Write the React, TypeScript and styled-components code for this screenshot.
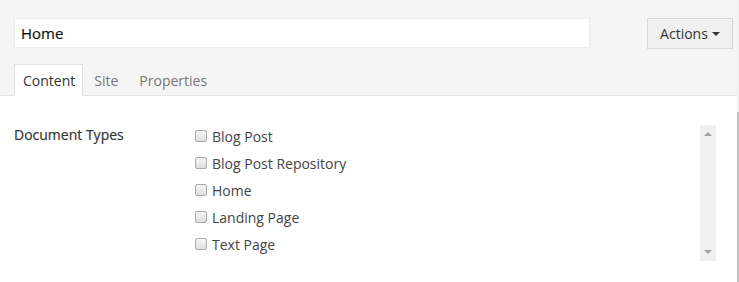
import React from 'react';
import styled, { createGlobalStyle } from 'styled-components';

const docTypes = ['Blog Post', 'Blog Post Repository', 'Home', 'Landing Page', 'Text Page'];
const tabs = ['Content', 'Site', 'Properties'];

function App() {
  return (
    <>
      <GlobalStyle />
      <Page>
        <Main>
          <Header>
            <TopRow>
              <NameInput defaultValue="Home" />
              <ActionsButton>
                Actions <Caret />
              </ActionsButton>
            </TopRow>
            <Tabs>
              {tabs.map((t, i) => (
                <Tab key={t} $active={i === 0}>
                  {t}
                </Tab>
              ))}
            </Tabs>
          </Header>
          <Body>
            <Field>
              <FieldLabel>Document Types</FieldLabel>
              <ListBox>
                <List>
                  {docTypes.map((d) => (
                    <Item key={d}>
                      <Check />
                      {d}
                    </Item>
                  ))}
                </List>
                <ScrollTrack>
                  <Arrow $dir="up" />
                  <Arrow $dir="down" />
                </ScrollTrack>
              </ListBox>
            </Field>
          </Body>
        </Main>
        <PageRail>
          <RailThumb />
        </PageRail>
      </Page>
    </>
  );
}

export default App;

const GlobalStyle = createGlobalStyle`
  html, body {
    margin: 0;
    padding: 0;
    background: #fff;
    font-family: "Open Sans", "DejaVu Sans", sans-serif;
    color: #333;
  }
  * {
    box-sizing: border-box;
  }
`;

const Page = styled.div`
  display: flex;
  height: 282px;
  overflow: hidden;
`;

const Main = styled.div`
  flex: 1;
  display: flex;
  flex-direction: column;
`;

const PageRail = styled.div`
  width: 2px;
  display: flex;
  flex-direction: column;
  background: #f0f0f0;
  padding-top: 112px;
`;

const RailThumb = styled.div`
  flex: 1;
  background: #c2c2c2;
`;

const Header = styled.header`
  background: #f5f5f5;
  padding: 18px 4px 0 14px;
  border-bottom: 1px solid #e3e3e3;
`;

const TopRow = styled.div`
  display: flex;
  justify-content: space-between;
  align-items: flex-start;
`;

const NameInput = styled.input`
  width: 576px;
  height: 30px;
  padding: 0 6px;
  border: 1px solid #ececec;
  background: #fff;
  font-family: inherit;
  font-size: 15px;
  font-weight: 400;
  -webkit-text-stroke: 0.2px #111;
  color: #111;
  outline: none;
`;

const ActionsButton = styled.button`
  display: flex;
  align-items: center;
  gap: 4px;
  width: 86px;
  height: 31px;
  justify-content: center;
  border: 1px solid #d9d9d9;
  background: #f0f0f0;
  font-family: inherit;
  font-size: 14px;
  color: #333;
  padding: 0;
`;

const Caret = styled.span`
  width: 0;
  height: 0;
  border-left: 4px solid transparent;
  border-right: 4px solid transparent;
  border-top: 4px solid #333;
  margin-top: 1px;
`;

const Tabs = styled.nav`
  display: flex;
  margin-top: 15px;
  margin-bottom: -1px;
`;

const Tab = styled.div<{ $active?: boolean }>`
  height: 32px;
  display: flex;
  align-items: center;
  padding-left: ${(p) => (p.$active ? '8px' : '10px')};
  padding-right: ${(p) => (p.$active ? '7px' : '9px')};
  font-size: 14px;
  color: ${(p) => (p.$active ? '#333' : '#777')};
  background: ${(p) => (p.$active ? '#fff' : 'transparent')};
  border: 1px solid ${(p) => (p.$active ? '#e3e3e3' : 'transparent')};
  border-bottom-color: ${(p) => (p.$active ? '#fff' : 'transparent')};
`;

const Body = styled.section`
  flex: 1;
  padding: 29px 21px 0 14px;
`;

const Field = styled.div`
  display: flex;
  align-items: flex-start;
`;

const FieldLabel = styled.div`
  width: 181px;
  font-size: 14px;
  font-weight: 400;
  -webkit-text-stroke: 0.2px #333;
  color: #333;
  line-height: 20px;
`;

const ListBox = styled.div`
  flex: 1;
  display: flex;
  justify-content: space-between;
  height: 136px;
`;

const List = styled.ul`
  list-style: none;
  margin: 1px 0 0;
  padding: 0;
  display: flex;
  flex-direction: column;
  gap: 7px;
`;

const Item = styled.li`
  display: flex;
  align-items: center;
  gap: 5px;
  font-size: 14px;
  color: #444;
  height: 20px;
`;

const Check = styled.span`
  width: 12px;
  height: 12px;
  border: 1px solid #aaa;
  border-radius: 2px;
  background: linear-gradient(#f6f6f6, #dedede);
`;

const ScrollTrack = styled.div`
  width: 16px;
  background: #f0f0f0;
  display: flex;
  flex-direction: column;
  justify-content: space-between;
  align-items: center;
  padding: 7px 0;
`;

const Arrow = styled.span<{ $dir: 'up' | 'down' }>`
  width: 0;
  height: 0;
  border-left: 4px solid transparent;
  border-right: 4px solid transparent;
  ${(p) => (p.$dir === 'up' ? 'border-bottom: 4px solid #a3a3a3;' : 'border-top: 4px solid #a3a3a3;')}
`;
